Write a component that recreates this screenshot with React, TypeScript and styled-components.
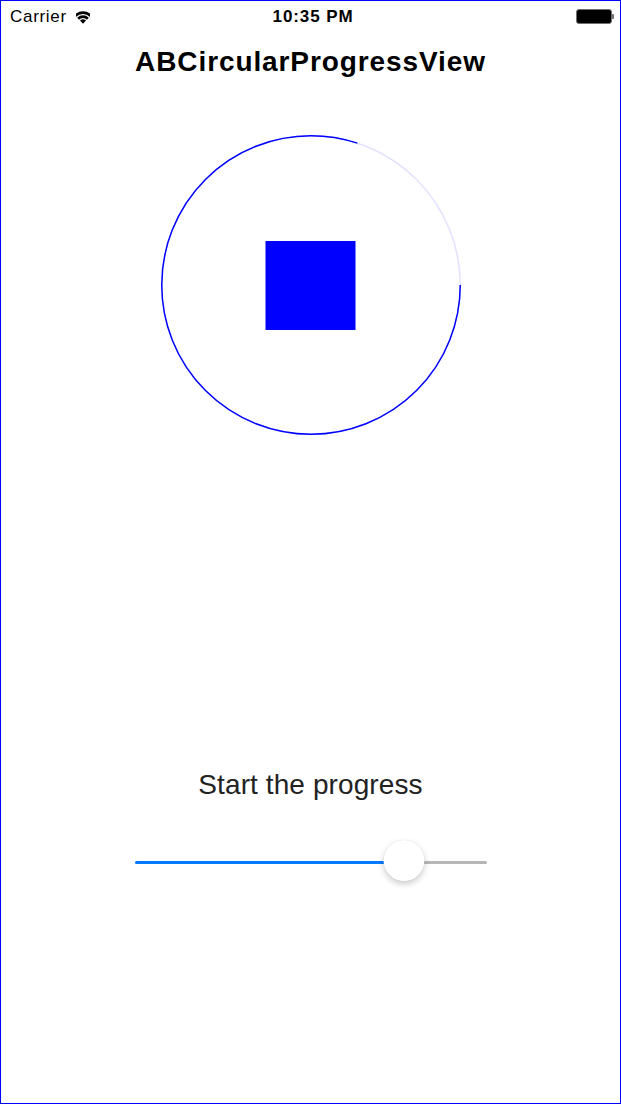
import React from "react";
import styled, { createGlobalStyle } from "styled-components";

const GlobalStyle = createGlobalStyle`
  html, body {
    margin: 0;
    padding: 0;
    background: #ffffff;
  }
  * { box-sizing: border-box; }
`;

const Frame = styled.div`
  width: 621px;
  height: 1104px;
  border: 1px solid #0000ff;
  background: #ffffff;
  display: flex;
  flex-direction: column;
  align-items: center;
  font-family: "Liberation Sans", Arial, sans-serif;
  color: #000;
  overflow: hidden;
`;

const StatusBar = styled.div`
  align-self: stretch;
  height: 32px;
  padding: 0 6px 0 9px;
  display: grid;
  grid-template-columns: 1fr auto 1fr;
  align-items: center;
`;

const StatusLeft = styled.div`
  display: flex;
  align-items: center;
  gap: 9px;
  font-size: 17px;
  letter-spacing: 0.7px;
  line-height: 20px;
  margin-top: 0;
`;

const Time = styled.div`
  font-size: 17px;
  font-weight: 700;
  letter-spacing: 0.9px;
  line-height: 20px;
  margin-top: 0;
  margin-left: 2px;
`;

const StatusRight = styled.div`
  display: flex;
  justify-content: flex-end;
  align-items: center;
  margin-top: -1px;
`;

const Battery = styled.div`
  display: flex;
  align-items: center;
`;

const BatteryBody = styled.div`
  width: 36px;
  height: 15px;
  border: 1.5px solid #707070;
  border-radius: 3px;
  background: #000;
`;

const BatteryNub = styled.div`
  width: 2px;
  height: 5px;
  background: #707070;
  border-radius: 0 1px 1px 0;
`;

const Title = styled.h1`
  margin: 13px 0 0;
  font-size: 28px;
  line-height: 32px;
  font-weight: 700;
  letter-spacing: 0.9px;
  text-align: center;
`;

const ProgressSvg = styled.svg`
  display: block;
  margin-top: 57px;
  margin-left: 1px;
`;

const Label = styled.div`
  margin-top: 334px;
  font-size: 28px;
  line-height: 32px;
  color: #222222;
  letter-spacing: 0.1px;
`;

const SliderWrap = styled.div`
  position: relative;
  margin-top: 39px;
  margin-left: 1px;
  width: 352px;
  height: 42px;
  display: flex;
  align-items: center;
`;

const Track = styled.div<{ $filled?: boolean }>`
  height: 3px;
  background: ${(p) => (p.$filled ? "#007aff" : "#b7b7b7")};
  border-radius: ${(p) => (p.$filled ? "2px 0 0 2px" : "0 2px 2px 0")};
  flex: ${(p) => (p.$filled ? "0 0 auto" : "1 1 auto")};
  margin-top: 2px;
`;

const Thumb = styled.div`
  position: absolute;
  top: 0;
  width: 41px;
  height: 41px;
  border-radius: 50%;
  background: #ffffff;
  box-shadow: 0 3px 6px rgba(0, 0, 0, 0.2), 0 0 1px rgba(0, 0, 0, 0.15);
  transform: translateX(-50%);
`;

function annularSector(cx: number, cy: number, r1: number, r2: number, deg: number) {
  const a = (deg * Math.PI) / 180;
  const s = Math.sin(a);
  const c = Math.cos(a);
  const p = (r: number, sign: number) => `${cx + sign * r * s} ${cy - r * c}`;
  if (r1 === 0) {
    return `M${cx} ${cy} L${p(r2, -1)} A${r2} ${r2} 0 0 1 ${p(r2, 1)} Z`;
  }
  return `M${p(r1, -1)} L${p(r2, -1)} A${r2} ${r2} 0 0 1 ${p(r2, 1)} L${p(r1, 1)} A${r1} ${r1} 0 0 0 ${p(r1, -1)} Z`;
}

const WifiIcon = () => (
  <svg width="14" height="13" viewBox="0 0 26 24" aria-hidden="true">
    <path d={annularSector(13, 23.5, 0, 8, 44)} fill="#000" />
    <path d={annularSector(13, 23.5, 10.5, 15.5, 44)} fill="#000" />
    <path d={annularSector(13, 23.5, 18, 23, 44)} fill="#000" />
  </svg>
);

const CircularProgress = ({ progress }: { progress: number }) => {
  const size = 300;
  const c = size / 2;
  const r = 149.25;
  const circ = 2 * Math.PI * r;
  return (
    <ProgressSvg width={size} height={size} viewBox={`0 0 ${size} ${size}`}>
      <circle cx={c} cy={c} r={r} fill="none" stroke="#e2e2ff" strokeWidth={1.5} />
      <circle
        cx={c}
        cy={c}
        r={r}
        fill="none"
        stroke="#0000ff"
        strokeWidth={1.5}
        strokeDasharray={`${circ * progress} ${circ}`}
      />
      <rect x={c - 45.5} y={c - 44} width={90} height={89} fill="#0000ff" />
    </ProgressSvg>
  );
};

const Slider = ({ value }: { value: number }) => {
  const width = 352;
  const thumb = 41;
  const x = thumb / 2 + (width - thumb) * value;
  return (
    <SliderWrap>
      <Track $filled style={{ width: x }} />
      <Track />
      <Thumb style={{ left: x }} />
    </SliderWrap>
  );
};

export default function App() {
  return (
    <>
      <GlobalStyle />
      <Frame>
        <StatusBar>
          <StatusLeft>
            <span>Carrier</span>
            <WifiIcon />
          </StatusLeft>
          <Time>10:35 PM</Time>
          <StatusRight>
            <Battery>
              <BatteryBody />
              <BatteryNub />
            </Battery>
          </StatusRight>
        </StatusBar>
        <Title>ABCircularProgressView</Title>
        <CircularProgress progress={0.8} />
        <Label>Start the progress</Label>
        <Slider value={0.8} />
      </Frame>
    </>
  );
}
